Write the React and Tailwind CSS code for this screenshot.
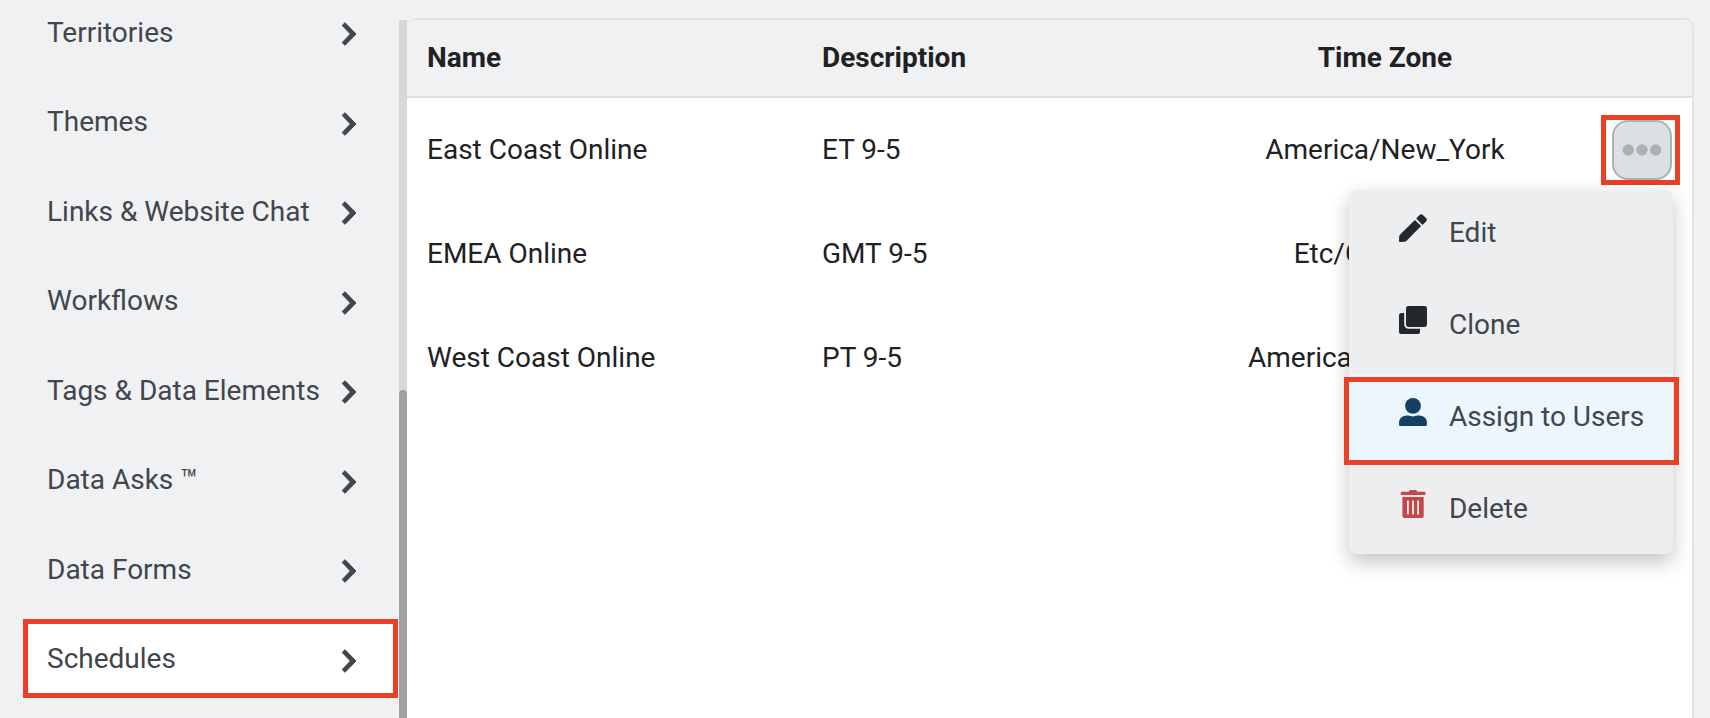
import React from 'react';

const sections = [
  'Territories',
  'Themes',
  'Links & Website Chat',
  'Workflows',
  'Tags & Data Elements',
  'Data Asks ™',
  'Data Forms',
  'Schedules',
];

const schedules = [
  { name: 'East Coast Online', description: 'ET 9-5', zone: 'America/New_York', open: true },
  { name: 'EMEA Online', description: 'GMT 9-5', zone: 'Etc/Greenwich' },
  { name: 'West Coast Online', description: 'PT 9-5', zone: 'America/Los_Angeles' },
];

function Chevron() {
  return (
    <svg className="mt-[3px] h-6 w-4 shrink-0" viewBox="0 0 16 24" aria-hidden="true">
      <path
        d="M1.2 3.4 4 .7 15 12 4 23.3 1.2 20.6 9.4 12Z"
        fill="#40464c"
        stroke="#40464c"
        strokeWidth="1"
        strokeLinejoin="round"
      />
    </svg>
  );
}

function PencilIcon() {
  return (
    <svg className="size-7" viewBox="0 0 28 28" fill="#23282c" aria-hidden="true">
      <path d="M15.9 5.9 22.1 12.1 7.6 26.8Q6.6 27.8 5.2 27.8L1 28Q0 28 0 27L.2 22.8Q.2 21.4 1.2 20.5Z" />
      <path d="M17.2 4.6 20.6 1Q22.2-.6 23.9 1L27 4.1Q28.7 5.8 27.1 7.4L23.5 10.9Z" />
    </svg>
  );
}

function CloneIcon() {
  return (
    <svg className="size-7" viewBox="0 0 28 28" fill="#23282c" aria-hidden="true">
      <rect x="7" y="0" width="21" height="21" rx="2.4" />
      <path d="M5.2 7H2.6A2.6 2.6 0 0 0 0 9.6V25.4A2.6 2.6 0 0 0 2.6 28H18.4A2.6 2.6 0 0 0 21 25.4V22.8H9.6A4.4 4.4 0 0 1 5.2 18.4Z" />
    </svg>
  );
}

function UserIcon() {
  return (
    <svg className="size-7" viewBox="0 0 28 28" fill="#163f66" aria-hidden="true">
      <circle cx="14" cy="7.9" r="7.9" />
      <path d="M7.4 17.5H9.2Q10.6 17.5 11.8 18Q14 18.9 16.2 18Q17.4 17.5 18.8 17.5H20.6Q28 18.2 28 25V26.4Q28 28 26.4 28H1.6Q0 28 0 26.4V25Q0 18.2 7.4 17.5Z" />
    </svg>
  );
}

function TrashIcon() {
  return (
    <svg className="size-7" viewBox="0 0 28 28" fill="#c4474a" aria-hidden="true">
      <path d="M2.6 1.7H9.6L10.4.4Q10.7 0 11.2 0H16.8Q17.3 0 17.6.4L18.4 1.7H25.6Q26.4 1.7 26.4 2.5V5H1.8V2.5Q1.8 1.7 2.6 1.7Z" />
      <path
        fillRule="evenodd"
        d="M3.4 7H24.7V25.4Q24.7 28 22.1 28H6Q3.4 28 3.4 25.4ZM8 10.4V24.6H9.8V10.4ZM13.1 10.4V24.6H14.9V10.4ZM18.2 10.4V24.6H20V10.4Z"
      />
    </svg>
  );
}

const actions = [
  { label: 'Edit', Icon: PencilIcon },
  { label: 'Clone', Icon: CloneIcon },
  { label: 'Assign to Users', Icon: UserIcon, active: true },
  { label: 'Delete', Icon: TrashIcon },
];

function ActionsMenu() {
  return (
    <div
      role="menu"
      className="absolute top-[70px] right-[2px] z-10 w-[324px] rounded-lg bg-[#edeef0] shadow-[0_8px_20px_rgba(0,0,0,0.24)]"
    >
      {actions.map(({ label, Icon, active }) => (
        <button
          key={label}
          type="button"
          role="menuitem"
          className={`relative flex h-[92px] w-full items-start pt-6 pl-[50px] text-left text-[#40464c] last:h-[88px] ${
            active ? 'bg-[#ebf6fe]' : ''
          }`}
        >
          <Icon />
          <span className="pt-[3px] pl-[22px] leading-8 whitespace-nowrap">{label}</span>
          {active && (
            <span className="absolute top-[3px] -right-1.5 -left-[5px] h-[88px] border-5 border-[#ea4025]" />
          )}
        </button>
      ))}
    </div>
  );
}

export default function App() {
  return (
    <div className="flex h-screen overflow-hidden bg-[#f0f1f3] font-[Roboto,sans-serif] text-[28px] leading-8 text-[#202124]">
      <nav className="-mt-2 mb-5 flex w-[399px] shrink-0 flex-col justify-between pr-px pl-[23px]">
        {sections.map((label) => (
          <a
            key={label}
            href="#"
            className={`flex h-[79px] shrink-0 items-center justify-between border-5 pt-0.5 pr-9 pl-[19px] whitespace-nowrap text-[#40464c] ${
              label === 'Schedules' ? 'border-[#ea4025] bg-white' : 'border-transparent'
            }`}
          >
            <span>{label}</span>
            <Chevron />
          </a>
        ))}
      </nav>

      <div className="mt-5 flex w-2 shrink-0 flex-col bg-[#d7d8da]">
        <div className="mt-[370px] grow rounded-t-full bg-[#a1a2a2]" />
      </div>

      <main className="mt-[18px] mr-4 min-w-0 grow rounded-t-[10px] border-t-2 border-r-2 border-[#e2e3e5] bg-white">
        <table className="w-full table-fixed border-separate border-spacing-0 text-left">
          <thead>
            <tr className="h-[78px] bg-[#f0f1f3]">
              <th className="w-[395px] rounded-tl-lg border-b-2 border-[#dfe0e2] pl-5 font-bold">Name</th>
              <th className="w-[376px] border-b-2 border-[#dfe0e2] pl-5 font-bold">Description</th>
              <th className="border-b-2 border-[#dfe0e2] text-center font-bold">Time Zone</th>
              <th className="w-[100px] rounded-tr-lg border-b-2 border-[#dfe0e2]" aria-label="Actions" />
            </tr>
          </thead>
          <tbody>
            {schedules.map((row) => (
              <tr key={row.name} className="h-[104px]">
                <td className="pl-5">{row.name}</td>
                <td className="pl-5">{row.description}</td>
                <td className="text-center">{row.zone}</td>
                <td className="pr-3 pl-[9px]">
                  {row.open && (
                    <div className="relative border-5 border-[#ea4025] pr-[3px] pl-1.5">
                      <button
                        type="button"
                        aria-label="Schedule actions"
                        aria-expanded="true"
                        className="flex size-[60px] items-center justify-center rounded-2xl border-2 border-[#aab2b7] bg-[#dde0e2]"
                      >
                        <svg className="h-3 w-10" viewBox="0 0 40 12" fill="#aab2b7" aria-hidden="true">
                          <circle cx="6.3" cy="6" r="5.7" />
                          <circle cx="20" cy="6" r="5.7" />
                          <circle cx="33.7" cy="6" r="5.7" />
                        </svg>
                      </button>
                      <ActionsMenu />
                    </div>
                  )}
                </td>
              </tr>
            ))}
          </tbody>
        </table>
      </main>
    </div>
  );
}
